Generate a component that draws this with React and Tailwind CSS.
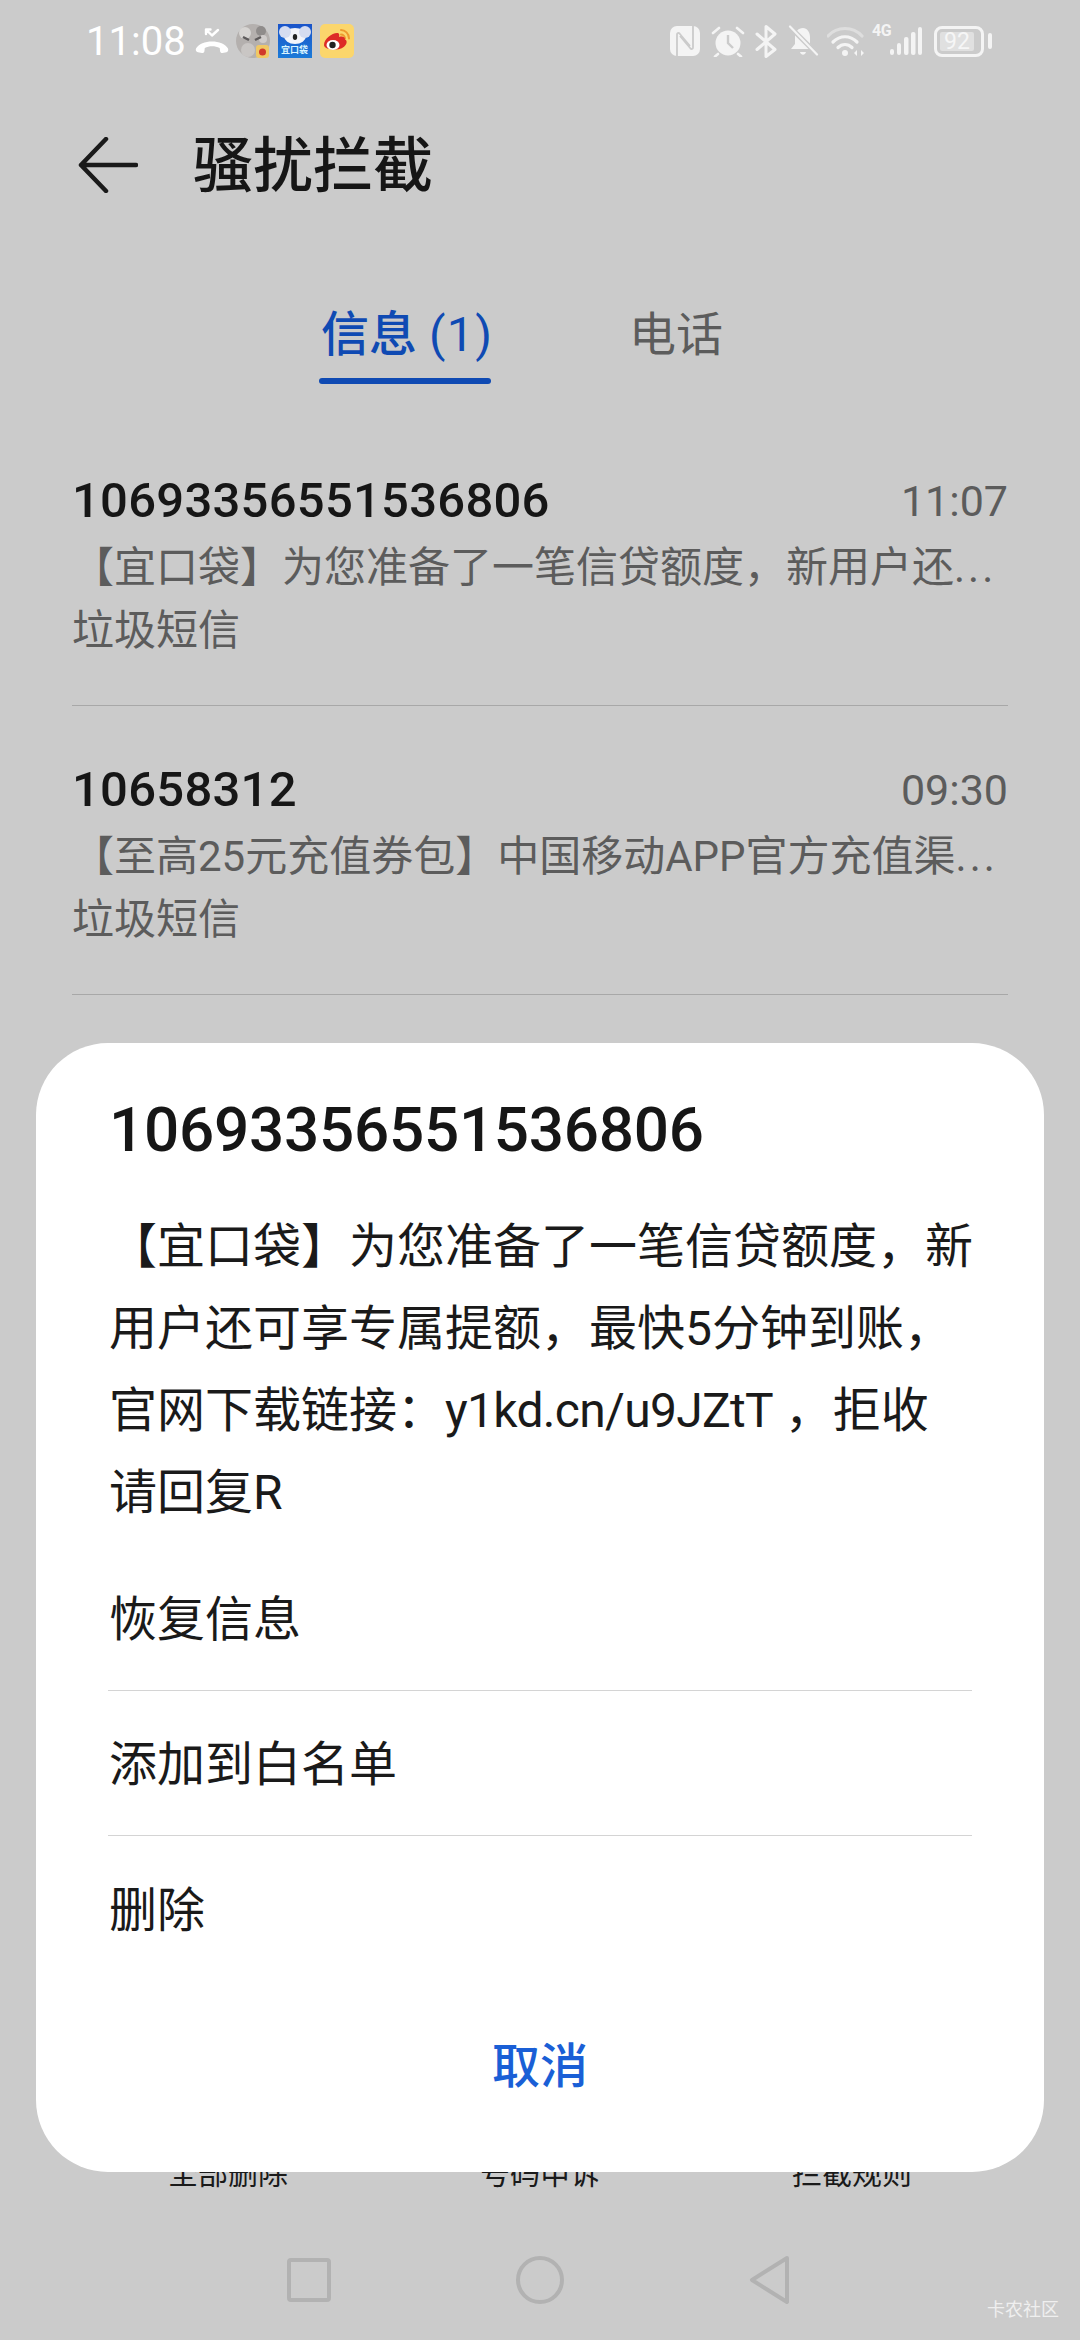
const font = "font-['Roboto','Noto_Sans_CJK_SC',sans-serif]";

function MissedCall() {
  return (
    <svg width="34" height="26" viewBox="0 0 34 26" fill="none" className="ml-[9px] mr-[7px]">
      <path d="M11 1.5l6 6 6-5.5M11 1.5v4.5M11 1.5h4.5" stroke="#fff" strokeWidth="2.4" strokeLinecap="round" strokeLinejoin="round" />
      <path d="M1 20.5C6 11 28 11 33 20.5c.6 1.5 0 3.5-1.5 3.8l-4 .7c-1.3.2-2.2-.6-2.4-1.8l-.4-3.2C20 17.6 14 17.6 9.800 20l-.4 3.200c-.2 1.200-1.100 2-2.400 1.800l-4-.7C1 24 .4 22 1 20.500z" fill="#fff" />
    </svg>
  );
}

function NotifyIcons() {
  return (
    <div className="flex items-center gap-[8px]">
      {/* contact avatar with small weibo badge */}
      <svg width="34" height="34" viewBox="0 0 34 34">
        <circle cx="17" cy="17" r="17" fill="#b4b0ae" />
        <circle cx="9" cy="9" r="6" fill="#d6d4d2" />
        <circle cx="25" cy="7" r="5" fill="#8f8c8b" />
        <circle cx="12" cy="26" r="7" fill="#c9c6c4" />
        <circle cx="27" cy="15" r="4" fill="#cfcccb" />
        <path d="M7 13l6 3M19 16l6-3" stroke="#5e5b5c" strokeWidth="2.500" />
        <rect x="20" y="21" width="13" height="13" rx="3" fill="#f0c864" />
        <circle cx="26.500" cy="28" r="3.500" fill="#d0392b" />
      </svg>
      <div className="w-[34px] h-[34px] bg-[linear-gradient(#1a54c9,#1b7ad8)] flex flex-col items-center overflow-hidden">
        <svg width="32" height="21" viewBox="0 0 32 21">
          <ellipse cx="16" cy="12" rx="11" ry="8" fill="#f2f4fa" />
          <circle cx="6" cy="8" r="6" fill="#d5dcf0" />
          <circle cx="26" cy="8" r="6" fill="#d5dcf0" />
          <ellipse cx="16" cy="13" rx="2.200" ry="3" fill="#222" />
        </svg>
        <span className="text-[9px] leading-[10px] text-[#d8f4ff] whitespace-nowrap font-bold">宜口袋</span>
      </div>
      <svg width="34" height="34" viewBox="0 0 34 34">
        <rect width="34" height="34" rx="5" fill="#fbd66c" />
        <path d="M21 6c4 0 8 3.500 8 8.500M21 10.500c2 0 4 1.800 4 4" stroke="#ee9a2e" strokeWidth="2" fill="none" strokeLinecap="round" />
        <path d="M4 21c0-6 8-12 13-12 2.500 0 2.500 2 2 4 3-1 6-.5 6 2.500 4 1.500 1 10-10 10-6 0-11-1.500-11-4.500z" fill="#dd2a26" />
        <ellipse cx="13" cy="21" rx="6.500" ry="5" fill="#fff" />
        <circle cx="12.500" cy="21" r="3.200" fill="#222" />
      </svg>
    </div>
  );
}

function SystemIcons() {
  return (
    <div className="flex items-center text-[#f4f4f4]">
      {/* nfc */}
      <svg width="30" height="30" viewBox="0 0 30 30" fill="none" className="mr-[11px]">
        <rect width="30" height="30" rx="7" fill="#f4f4f4" />
        <path d="M7 30V8.500c0-1.500 1.500-2 2.500-1L20 20" stroke="#cbcbcb" strokeWidth="1.800" />
        <path d="M23 0v21.500c0 1.500-1.500 2-2.500 1L10 10" stroke="#cbcbcb" strokeWidth="1.800" />
      </svg>
      {/* alarm */}
      <svg width="34" height="31" viewBox="0 0 34 31" fill="none" className="mr-[10px]">
        <circle cx="17" cy="17" r="12.500" fill="#f4f4f4" />
        <path d="M17 9v8l5 5" stroke="#cbcbcb" strokeWidth="2.400" />
        <path d="M2 7l6-5M32 7l-6-5M7 28l-3 2.500M27 28l3 2.500" stroke="#f4f4f4" strokeWidth="2.600" strokeLinecap="round" />
      </svg>
      {/* bluetooth */}
      <svg width="22" height="33" viewBox="0 0 22 33" fill="none" className="mr-[11px]">
        <path d="M2 9l18 15.500-9 7V1.500l9 7.500L2 24.500" stroke="#f4f4f4" strokeWidth="3" strokeLinejoin="round" strokeLinecap="round" />
      </svg>
      {/* muted bell */}
      <svg width="31" height="32" viewBox="0 0 31 32" fill="none" className="mr-[8px]">
        <path d="M15 3c-5 0-8 4-8 9v7l-4 5h23l-4-5v-7c0-5-3-9-7-9z" fill="#f4f4f4" />
        <path d="M12 27c1 3.500 5 3.500 6 0z" fill="#f4f4f4" />
        <path d="M2 2l27 27" stroke="#cbcbcb" strokeWidth="5" />
        <path d="M2 1.500l27 28" stroke="#f4f4f4" strokeWidth="2.200" strokeLinecap="round" />
      </svg>
      {/* wifi */}
      <svg width="38" height="31" viewBox="0 0 38 31" fill="none" className="mr-[7px]">
        <path d="M1 10C10 0 26 0 35 10" stroke="#dedede" strokeWidth="3.200" strokeLinecap="round" />
        <path d="M6 16c7-7 17-7 24 0M11 21.500c4-4 10-4 14 0" stroke="#f4f4f4" strokeWidth="3.200" strokeLinecap="round" />
        <circle cx="18" cy="27" r="3" fill="#f4f4f4" />
        <path d="M27 27l3-3v6zM34 24l3 3-3 3z" fill="#f4f4f4" />
      </svg>
      {/* 4g + signal */}
      <div className="relative w-[50px] h-[30px] mr-[12px]">
        <span className="absolute left-0 top-[-3px] text-[16px] leading-[16px] font-bold text-[#f4f4f4] tracking-[-0.5px]">4G</span>
        <svg width="32" height="29" viewBox="0 0 32 29" className="absolute left-[18px] top-0" fill="#f4f4f4">
          <rect x="0" y="23" width="4" height="6" rx="2" />
          <rect x="7" y="17" width="4" height="12" rx="2" />
          <rect x="14" y="11" width="4.500" height="18" rx="2" />
          <rect x="21" y="6" width="4.500" height="23" rx="2" />
          <rect x="28" y="1" width="4" height="28" rx="2" />
        </svg>
      </div>
      {/* battery */}
      <div className="w-[50px] h-[31px] border-[3px] border-[#f4f4f4] rounded-[8px] p-[3px] flex">
        <div className="w-[34px] h-full bg-[#e0e0e0] rounded-[2px] flex items-center justify-center text-[23px] leading-none text-[#f6f6f6]">92</div>
      </div>
      <div className="w-[4px] h-[16px] bg-[#f4f4f4] rounded-[2px] ml-[4px]"></div>
    </div>
  );
}

function SmsRow({ number, time, text }) {
  return (
    <div className="h-[289px] mx-[72px] pt-[51px] border-b border-[#a8a8a8]">
      <div className="flex items-center justify-between h-[66px]">
        <span className="text-[49px] leading-[66px] font-medium text-[#161616] tracking-[0.25px]">{number}</span>
        <span className="text-[43px] leading-[66px] text-[#5c5c5c]">{time}</span>
      </div>
      <p className="mt-[2px] text-[42px] leading-[63px] text-[#5c5c5c] whitespace-nowrap">
        {text}<span className="tracking-[3px]">...</span>
      </p>
      <p className="text-[42px] leading-[63px] text-[#5c5c5c]">垃圾短信</p>
    </div>
  );
}

function MenuItem({ children, last }) {
  return (
    <div className={`h-[145px] flex items-center pl-[1px] pt-[4px] text-[48px] text-[#1a1a1a] ${last ? "" : "border-b border-[#d4d4d4]"}`}>
      {children}
    </div>
  );
}

export default function App() {
  return (
    <div className={`${font} relative w-[1080px] h-[2340px] overflow-hidden bg-[#cbcbcb] flex flex-col`}>
      {/* STATUS BAR */}
      <div className="h-[82px] flex items-center justify-between pl-[86px] pr-[88px]">
        <div className="flex items-center">
          <span className="pt-[2px] text-[40px] leading-none text-white">11:08</span>
          <MissedCall />
          <NotifyIcons />
        </div>
        <SystemIcons />
      </div>

      {/* HEADER */}
      <div className="h-[166px] flex items-center pl-[78px]">
        <svg width="60" height="56" viewBox="0 0 60 56" fill="none">
          <path d="M28 2L3 28l25 26M3 28h55" stroke="#1a1a1a" strokeWidth="4.500" strokeLinecap="round" strokeLinejoin="round" />
        </svg>
        <h1 className="ml-[55px] pt-[3px] text-[60px] leading-none font-medium text-[#161616]">骚扰拦截</h1>
      </div>

      {/* TABS */}
      <div className="flex pl-[319px] pt-[59px]">
        <div className="w-[172px]">
          <div className="h-[56px] pl-[2px] text-[48px] leading-[56px] font-medium text-[#0f4ab3] whitespace-nowrap">
            信息 <span className="font-normal tracking-[1.5px]">(1)</span>
          </div>
          <div className="mt-[15px] h-[6px] rounded-[3px] bg-[#0f4ab3]"></div>
        </div>
        <div className="ml-[138px] h-[56px] text-[47px] leading-[56px] text-[#5c5c5c]">电话</div>
      </div>

      {/* LIST */}
      <div className="mt-[33px]">
        <SmsRow number="10693356551536806" time="11:07" text="【宜口袋】为您准备了一笔信贷额度，新用户还" />
        <SmsRow number="10658312" time="09:30" text="【至高25元充值券包】中国移动APP官方充值渠" />
      </div>

      {/* BOTTOM ACTIONS */}
      <div className="mt-auto grid grid-cols-3 px-[72px] text-center text-[30px] leading-[40px] text-[#1a1a1a]">
        <span>全部删除</span>
        <span>号码申诉</span>
        <span>拦截规则</span>
      </div>

      {/* NAV BAR */}
      <div className="mt-[26px] h-[120px] flex items-center pl-[287px]">
        <div className="w-[44px] h-[44px] border-[4px] border-[#b2b2b2] rounded-[4px]"></div>
        <div className="ml-[185px] w-[48px] h-[48px] border-[4px] border-[#b2b2b2] rounded-full"></div>
        <svg width="40" height="48" viewBox="0 0 40 48" fill="none" className="ml-[185px]">
          <path d="M38 2L3 24l35 22z" stroke="#b2b2b2" strokeWidth="4" strokeLinejoin="round" />
        </svg>
      </div>

      {/* WATERMARK */}
      <span className="absolute left-[987px] top-[2300px] text-[18px] leading-[20px] text-[#efefef]">卡农社区</span>

      {/* DIALOG */}
      <div className="absolute left-[36px] top-[1043px] w-[1008px] h-[1129px] bg-white rounded-[72px] px-[72px] pt-[47px]">
        <h2 className="pl-[1px] h-[80px] text-[62px] leading-[80px] font-medium text-[#161616] tracking-[-0.25px]">10693356551536806</h2>
        <p className="pl-[1px] mt-[36px] text-[48px] leading-[82px] text-[#1a1a1a] whitespace-nowrap">
          【宜口袋】为您准备了一笔信贷额度，新<br />
          用户还可享专属提额，最快5分钟到账，<br />
          官网下载链接：<span className="tracking-[-0.7px]">y1kd.cn/u9JZtT</span> ，拒收<br />
          请回复R
        </p>
        <div className="mt-[12px]">
          <MenuItem>恢复信息</MenuItem>
          <MenuItem>添加到白名单</MenuItem>
          <MenuItem last>删除</MenuItem>
        </div>
        <div className="mt-[46px] h-[80px] text-center text-[48px] leading-[80px] font-medium text-[#1a5fd6]">取消</div>
      </div>
    </div>
  );
}
